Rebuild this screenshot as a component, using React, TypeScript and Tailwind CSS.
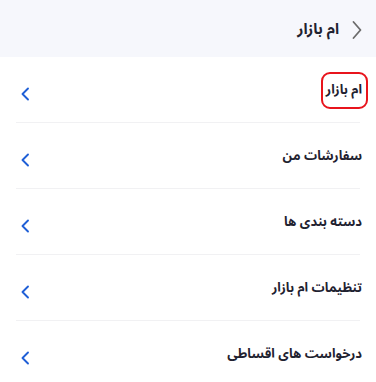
import React from "react";

const items = ["ام بازار", "سفارشات من", "دسته بندی ها", "تنظیمات ام بازار", "درخواست های اقساطی"];

function ChevronLeft({ className }: { className?: string }) {
  return (
    <svg viewBox="0 0 10 14" width="10" height="14" fill="none" stroke="currentColor" strokeWidth="1.9" strokeLinecap="round" strokeLinejoin="round" className={className}>
      <path d="M8 1.5L2.5 7 8 12.5" />
    </svg>
  );
}

function ChevronRight({ className }: { className?: string }) {
  return (
    <svg viewBox="0 0 12 20" width="12" height="20" fill="none" stroke="currentColor" strokeWidth="1.8" strokeLinecap="round" strokeLinejoin="round" className={className}>
      <path d="M2.5 2l7 8-7 8" />
    </svg>
  );
}

export default function App() {
  return (
    <div dir="rtl" className="w-[376px] h-[382px] overflow-hidden bg-white" style={{ fontFamily: '"Noto Sans Arabic", "DejaVu Sans", "Noto Sans", sans-serif' }}>
      <div className="h-[57px] bg-[#f6f7fc] flex items-center pr-[13px] gap-[12px]">
        <ChevronRight className="text-[#6b6b6b] mt-[3px]" />
        <span className="text-[15px] font-bold text-[#1f2230] mt-[1px]">ام بازار</span>
      </div>
      <div>
        {items.map((t, i) => (
          <div key={t} className="mx-4 h-[66px] flex items-center justify-between border-b border-[#f1f1f3] last:border-b-0">
            <span className="relative text-[13px] font-bold text-[#1f2230] mr-[-2px] mt-[2px]">
              {t}
              {i === 0 && <span className="absolute -top-[9px] -bottom-[9px] -right-[6px] -left-[5px] border-2 border-[#e8141c] rounded-[9px]" />}
            </span>
            <ChevronLeft className="text-[#1f5fd6] ml-[4px] mt-[8px]" />
          </div>
        ))}
      </div>
    </div>
  );
}
